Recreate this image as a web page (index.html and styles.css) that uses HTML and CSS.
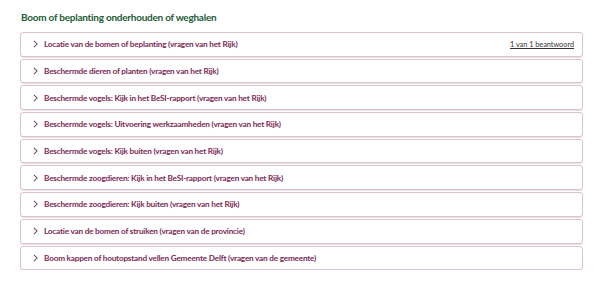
FILE: index.html
```html
<!DOCTYPE html>
<html lang="nl">
<head>
<meta charset="utf-8">
<link rel="stylesheet" href="styles.css">
</head>
<body>
<main class="page">
  <h2 class="title">Boom of beplanting onderhouden of weghalen</h2>
  <ul class="list">
    <li class="item"><span class="chev"><svg viewBox="0 0 6 10" width="5" height="8"><path d="M1 1l4 4-4 4" fill="none" stroke="currentColor" stroke-width="1.3"/></svg></span><span class="label">Locatie van de bomen of beplanting (vragen van het Rijk)</span><a class="status" href="#">1 van 1 beantwoord</a></li>
    <li class="item"><span class="chev"><svg viewBox="0 0 6 10" width="5" height="8"><path d="M1 1l4 4-4 4" fill="none" stroke="currentColor" stroke-width="1.3"/></svg></span><span class="label">Beschermde dieren of planten (vragen van het Rijk)</span></li>
    <li class="item"><span class="chev"><svg viewBox="0 0 6 10" width="5" height="8"><path d="M1 1l4 4-4 4" fill="none" stroke="currentColor" stroke-width="1.3"/></svg></span><span class="label">Beschermde vogels: Kijk in het BeSI-rapport (vragen van het Rijk)</span></li>
    <li class="item"><span class="chev"><svg viewBox="0 0 6 10" width="5" height="8"><path d="M1 1l4 4-4 4" fill="none" stroke="currentColor" stroke-width="1.3"/></svg></span><span class="label">Beschermde vogels: Uitvoering werkzaamheden (vragen van het Rijk)</span></li>
    <li class="item"><span class="chev"><svg viewBox="0 0 6 10" width="5" height="8"><path d="M1 1l4 4-4 4" fill="none" stroke="currentColor" stroke-width="1.3"/></svg></span><span class="label">Beschermde vogels: Kijk buiten (vragen van het Rijk)</span></li>
    <li class="item"><span class="chev"><svg viewBox="0 0 6 10" width="5" height="8"><path d="M1 1l4 4-4 4" fill="none" stroke="currentColor" stroke-width="1.3"/></svg></span><span class="label">Beschermde zoogdieren: Kijk in het BeSI-rapport (vragen van het Rijk)</span></li>
    <li class="item"><span class="chev"><svg viewBox="0 0 6 10" width="5" height="8"><path d="M1 1l4 4-4 4" fill="none" stroke="currentColor" stroke-width="1.3"/></svg></span><span class="label">Beschermde zoogdieren: Kijk buiten (vragen van het Rijk)</span></li>
    <li class="item"><span class="chev"><svg viewBox="0 0 6 10" width="5" height="8"><path d="M1 1l4 4-4 4" fill="none" stroke="currentColor" stroke-width="1.3"/></svg></span><span class="label">Locatie van de bomen of struiken (vragen van de provincie)</span></li>
    <li class="item"><span class="chev"><svg viewBox="0 0 6 10" width="5" height="8"><path d="M1 1l4 4-4 4" fill="none" stroke="currentColor" stroke-width="1.3"/></svg></span><span class="label">Boom kappen of houtopstand vellen Gemeente Delft (vragen van de gemeente)</span></li>
  </ul>
</main>
</body>
</html>
```

FILE: styles.css
```css
html, body {
  margin: 0;
  padding: 0;
  background: #ffffff;
}
body {
  font-family: "Lato", "Noto Sans", sans-serif;
}
.page {
  padding: 10px 17px 0 20px;
}
.title {
  margin: 0 0 8px 1px;
  font-size: 10px;
  line-height: 14px;
  font-weight: 700;
  letter-spacing: -0.25px;
  color: #1e5b36;
}
.list {
  list-style: none;
  margin: 0;
  padding: 0;
  display: flex;
  flex-direction: column;
  gap: 2px;
}
.item {
  display: flex;
  align-items: center;
  height: 22.7px;
  border: 1px solid #dcc3cf;
  border-radius: 3px;
  padding: 0 8px 0 12px;
  color: #7b2a54;
  box-shadow: 0 1px 0 #ecdde4;
}
.chev {
  display: flex;
  width: 11px;
  color: #6d4a5c;
}
.label {
  font-size: 8.2px;
  font-weight: 700;
  letter-spacing: -0.2px;
  flex: 1;
}
.status {
  font-size: 7.3px;
  color: #333333;
  text-decoration: underline;
}
```
